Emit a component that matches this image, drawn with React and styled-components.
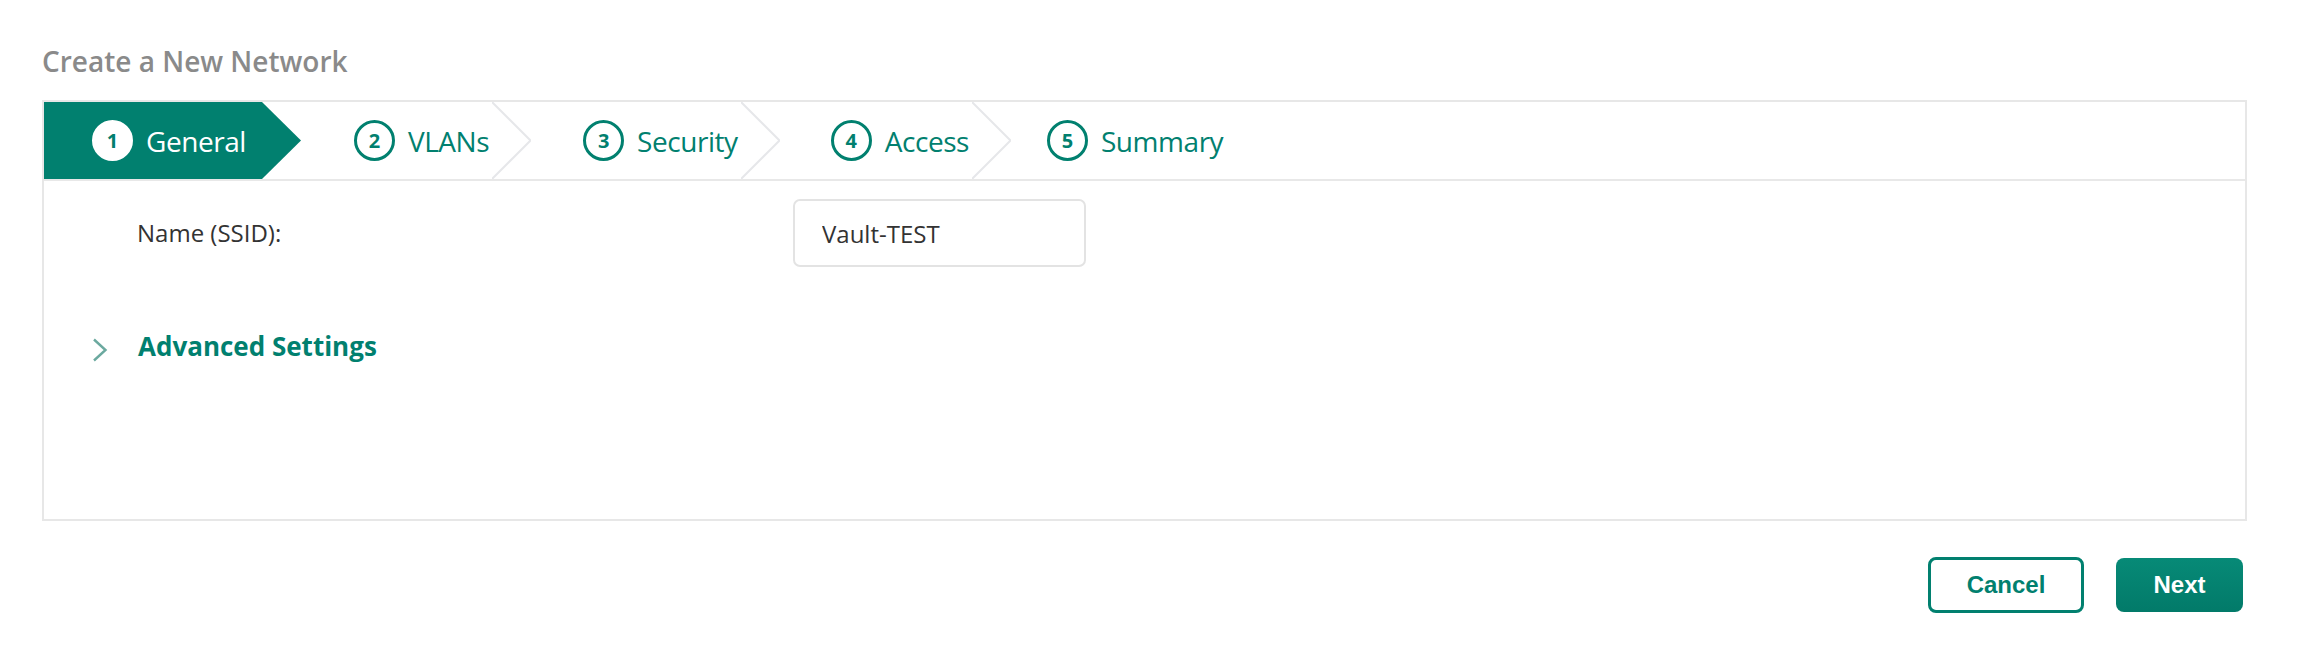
import React from 'react';
import styled, { createGlobalStyle } from 'styled-components';

const TEAL = '#01806f';

const Global = createGlobalStyle`
  *, *::before, *::after { box-sizing: border-box; }
  html, body { margin: 0; padding: 0; background: #ffffff; }
  body { font-family: "Open Sans", "Noto Sans", sans-serif; }
`;

const Page = styled.div`
  padding: 42px 57px 0 42px;
`;

const Title = styled.h1`
  margin: 0;
  font-size: 28px;
  line-height: 38px;
  font-weight: 600;
  color: #8a8a8a;
`;

const Panel = styled.section`
  margin-top: 20px;
  border: 2px solid #e7e7e7;
`;

const StepBar = styled.ol`
  display: flex;
  align-items: stretch;
  height: 79px;
  margin: 0;
  padding: 0;
  list-style: none;
  border-bottom: 2px solid #e8e8e8;
`;

const Step = styled.li`
  display: flex;
  align-items: center;
  gap: 13px;
  padding-left: ${(p) => p.$pl}px;
  padding-right: ${(p) => p.$pr}px;
  background: ${(p) => (p.$active ? TEAL : 'transparent')};
  color: ${(p) => (p.$active ? '#ffffff' : TEAL)};
  font-size: 28px;
  line-height: 38px;
  letter-spacing: -0.45px;
  white-space: nowrap;
`;

const Badge = styled.span`
  flex: none;
  width: 41px;
  height: 41px;
  border-radius: 50%;
  border: 3.5px solid ${(p) => (p.$active ? '#ffffff' : TEAL)};
  background: ${(p) => (p.$active ? '#ffffff' : 'transparent')};
  color: ${TEAL};
  display: flex;
  align-items: center;
  justify-content: center;
  font-size: 20px;
  font-weight: 700;
  letter-spacing: 0;
  line-height: 1;
`;

const Sep = styled.svg`
  flex: none;
  display: block;
  width: 39px;
  height: 77px;
`;

const Separator = ({ active }) => (
  <Sep viewBox="0 0 39 77" aria-hidden="true">
    {active ? (
      <polygon points="0,0 39,38.5 0,77" fill={TEAL} />
    ) : (
      <polyline points="0,0 38.5,38.5 0,77" fill="none" stroke="#e6e7ea" strokeWidth="2" />
    )}
  </Sep>
);

const Body = styled.div`
  min-height: 338px;
  padding: 18px 0 0 48px;
`;

const FieldRow = styled.div`
  display: grid;
  grid-template-columns: 656px 293px;
  align-items: center;
  padding-left: 45px;
`;

const Label = styled.label`
  font-size: 24px;
  line-height: 36px;
  color: #333333;
`;

const TextInput = styled.input`
  height: 68px;
  width: 293px;
  border: 2px solid #e3e3e3;
  border-radius: 7px;
  padding: 0 0 0 27px;
  font-family: "Open Sans", "Noto Sans", sans-serif;
  font-size: 24px;
  color: #333333;
  background: #ffffff;
  outline: none;
`;

const Toggle = styled.div`
  display: flex;
  align-items: flex-start;
  gap: 30px;
  margin-top: 61px;
`;

const ToggleIcon = styled.svg`
  flex: none;
  width: 16px;
  height: 24px;
  margin-top: 10px;
`;

const ToggleText = styled.span`
  font-size: 26px;
  line-height: 36px;
  font-weight: 700;
  color: ${TEAL};
`;

const Actions = styled.div`
  display: flex;
  justify-content: flex-end;
  align-items: center;
  gap: 32px;
  margin-top: 36px;
  padding-right: 4px;
`;

const Button = styled.button`
  font-family: "Liberation Sans", Arial, sans-serif;
  font-size: 24px;
  font-weight: 700;
  border-radius: 8px;
  cursor: pointer;
  display: flex;
  align-items: center;
  justify-content: center;
  padding: 0;
  width: ${(p) => (p.$primary ? 127 : 156)}px;
  height: ${(p) => (p.$primary ? 54 : 56)}px;
  border: ${(p) => (p.$primary ? 'none' : `3px solid ${TEAL}`)};
  color: ${(p) => (p.$primary ? '#ffffff' : TEAL)};
  background: ${(p) => (p.$primary ? 'linear-gradient(#078a77, #027a69)' : '#ffffff')};
`;

const steps = [
  { n: 1, label: 'General', pl: 48, pr: 16 },
  { n: 2, label: 'VLANs', pl: 53, pr: 3 },
  { n: 3, label: 'Security', pl: 52, pr: 3 },
  { n: 4, label: 'Access', pl: 51, pr: 3 },
  { n: 5, label: 'Summary', pl: 36, pr: 0 },
];

export default function App() {
  return (
    <>
      <Global />
      <Page>
        <Title>Create a New Network</Title>
        <Panel>
          <StepBar>
            {steps.map((s, i) => (
              <React.Fragment key={s.n}>
                <Step $active={i === 0} $pl={s.pl} $pr={s.pr}>
                  <Badge $active={i === 0}>{s.n}</Badge>
                  {s.label}
                </Step>
                {i < steps.length - 1 && <Separator active={i === 0} />}
              </React.Fragment>
            ))}
          </StepBar>
          <Body>
            <FieldRow>
              <Label htmlFor="ssid">Name (SSID):</Label>
              <TextInput id="ssid" defaultValue="Vault-TEST" />
            </FieldRow>
            <Toggle>
              <ToggleIcon viewBox="0 0 16 24" aria-hidden="true">
                <polyline points="2,1.5 13.5,12 2,22.5" fill="none" stroke="#6ba99f" strokeWidth="2.4" />
              </ToggleIcon>
              <ToggleText>Advanced Settings</ToggleText>
            </Toggle>
          </Body>
        </Panel>
        <Actions>
          <Button>Cancel</Button>
          <Button $primary>Next</Button>
        </Actions>
      </Page>
    </>
  );
}
